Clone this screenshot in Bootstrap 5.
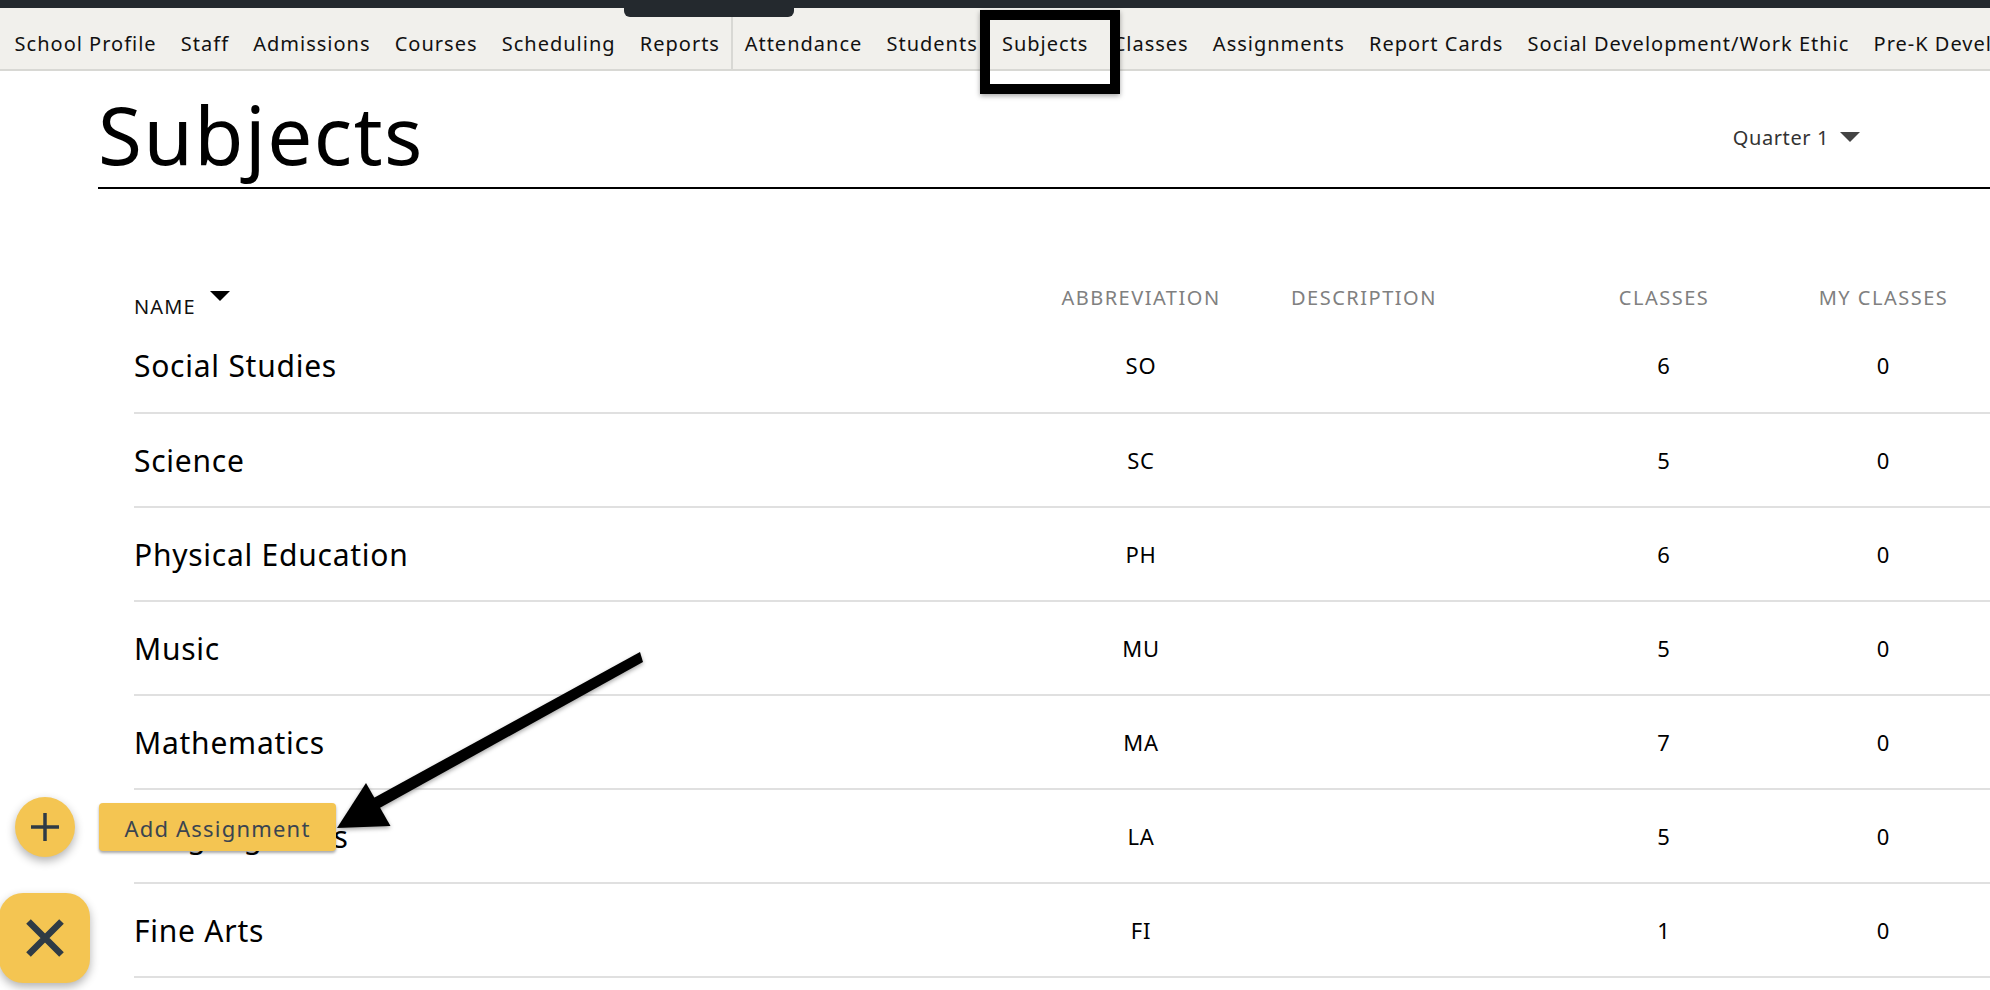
<!DOCTYPE html>
<html lang="en">
<head>
<meta charset="utf-8">
<title>Subjects</title>
<link href="https://cdn.jsdelivr.net/npm/bootstrap@5.3.0/dist/css/bootstrap.min.css" rel="stylesheet">
<style>
html,body{height:990px;overflow:hidden}
body{font-family:"Noto Sans","Liberation Sans",sans-serif;background:#fff;color:#000;position:relative}
.topstrip{height:8px;background:#24292e}
.toptab{position:absolute;left:624px;top:8px;width:170px;height:9px;background:#24292e;border-radius:0 0 6px 6px}
.schoolnav{height:63px;background:#f1f0ec;border-bottom:2px solid #d8d8d4;flex-wrap:nowrap;overflow:hidden;padding:11px 0 0 2.5px;white-space:nowrap}
.schoolnav .nav-link{color:#111;font-size:20px;line-height:50px;padding:0 12.1px;letter-spacing:1px}
.navsplit{border-left:2px solid #d8d8d4;margin-top:-11px;margin-left:-1.5px;padding-top:11px !important}
.pagemain{padding-left:98px}
.titlerow{height:118px;border-bottom:2px solid #000;padding-top:10px}
.pagetitle{font-size:80px;line-height:1;font-weight:400;margin:0;letter-spacing:1.5px;color:#000}
.termpick{font-size:20px;color:#333;margin-right:130px;letter-spacing:.6px;margin-top:8px}
.tri{display:inline-block;width:0;height:0;border-left:10px solid transparent;border-right:10px solid transparent;border-top:10px solid #444;margin-left:11px;vertical-align:3px}
.subjwrap{padding-left:36px;margin-top:72px}
.subjtable{--bs-table-color:#000;table-layout:fixed;width:1856px;margin:0}
.subjtable th{font-size:20px;font-weight:400;color:#808080;padding:19px 0 0;border:0;text-transform:uppercase;vertical-align:top;line-height:36px;letter-spacing:1.5px}
.subjtable th.sorted{color:#111;line-height:25px;padding:30px 0 0;letter-spacing:1.1px}
.subjtable th.sorted .tri{border-top-color:#000;margin-left:14px;vertical-align:13px}
.subjtable td{height:94px;padding:0;vertical-align:middle;border-bottom:2px solid #e0e0e0;font-size:22px;letter-spacing:.8px;color:#000}
.subjtable td.subjname{font-size:30px;letter-spacing:.75px}
.subjtable th:last-child,.subjtable td:last-child{padding-right:5px}
.fabround{position:absolute;left:15px;top:797px;width:60px;height:60px;border-radius:50%;background:#f4c552;box-shadow:0 4px 10px rgba(0,0,0,.3);border:0;padding:0}
.fabsquare{position:absolute;left:-1px;top:893px;width:91px;height:90px;border-radius:24px;background:#f4c552;box-shadow:0 4px 10px rgba(0,0,0,.3);border:0;padding:0}
.fablabel{position:absolute;left:99px;top:803px;width:237px;height:48px;border-radius:4px;background:#f4c552;color:#3a4450;font-size:22px;line-height:50px;text-align:center;box-shadow:0 2px 3px rgba(0,0,0,.35);letter-spacing:1.2px}
.hilite{position:absolute;left:980px;top:10px;width:140px;height:84px;border:10px solid #000;box-shadow:0 2px 5px rgba(0,0,0,.35)}
.pointer{position:absolute;left:0;top:0;pointer-events:none}
</style>
</head>
<body>
<div class="topstrip"></div>
<nav class="nav schoolnav">
<a class="nav-link" href="#">School Profile</a>
<a class="nav-link" href="#">Staff</a>
<a class="nav-link" href="#">Admissions</a>
<a class="nav-link" href="#">Courses</a>
<a class="nav-link" href="#">Scheduling</a>
<a class="nav-link" href="#">Reports</a>
<a class="nav-link navsplit" href="#">Attendance</a>
<a class="nav-link" href="#">Students</a>
<a class="nav-link" href="#">Subjects</a>
<a class="nav-link" href="#">Classes</a>
<a class="nav-link" href="#">Assignments</a>
<a class="nav-link" href="#">Report Cards</a>
<a class="nav-link" href="#">Social Development/Work Ethic</a>
<a class="nav-link" href="#">Pre-K Development</a>
</nav>
<div class="toptab"></div>
<main class="pagemain">
<div class="titlerow d-flex align-items-center justify-content-between">
<h1 class="pagetitle">Subjects</h1>
<div class="termpick">Quarter 1<span class="tri"></span></div>
</div>
<div class="subjwrap">
<table class="table subjtable">
<colgroup><col style="width:857px"><col style="width:300px"><col style="width:255px"><col style="width:236px"><col style="width:208px"></colgroup>
<thead><tr>
<th class="sorted">Name<span class="tri"></span></th>
<th class="text-center">Abbreviation</th>
<th>Description</th>
<th class="text-center">Classes</th>
<th class="text-center">My Classes</th>
</tr></thead>
<tbody>
<tr><td class="subjname">Social Studies</td><td class="text-center">SO</td><td></td><td class="text-center">6</td><td class="text-center">0</td></tr>
<tr><td class="subjname">Science</td><td class="text-center">SC</td><td></td><td class="text-center">5</td><td class="text-center">0</td></tr>
<tr><td class="subjname">Physical Education</td><td class="text-center">PH</td><td></td><td class="text-center">6</td><td class="text-center">0</td></tr>
<tr><td class="subjname">Music</td><td class="text-center">MU</td><td></td><td class="text-center">5</td><td class="text-center">0</td></tr>
<tr><td class="subjname">Mathematics</td><td class="text-center">MA</td><td></td><td class="text-center">7</td><td class="text-center">0</td></tr>
<tr><td class="subjname">Language Arts</td><td class="text-center">LA</td><td></td><td class="text-center">5</td><td class="text-center">0</td></tr>
<tr><td class="subjname">Fine Arts</td><td class="text-center">FI</td><td></td><td class="text-center">1</td><td class="text-center">0</td></tr>
</tbody>
</table>
</div>
</main>
<button class="fabround d-flex align-items-center justify-content-center" aria-label="Add">
<svg width="28" height="28" viewBox="0 0 28 28"><path d="M14 0V28M0 14H28" stroke="#2f3b45" stroke-width="3.5" fill="none"/></svg>
</button>
<div class="fablabel">Add Assignment</div>
<button class="fabsquare d-flex align-items-center justify-content-center" aria-label="Close">
<svg width="38" height="38" viewBox="0 0 38 38"><path d="M2.5 2.5L35.5 35.5M35.5 2.5L2.5 35.5" stroke="#2f3b45" stroke-width="6.5" fill="none"/></svg>
</button>
<div class="hilite"></div>
<svg class="pointer" width="1990" height="990" viewBox="0 0 1990 990">
<defs><filter id="arrowshade" x="-10%" y="-10%" width="120%" height="120%"><feDropShadow dx="0" dy="2" stdDeviation="2" flood-color="#000" flood-opacity=".35"/></filter></defs>
<g filter="url(#arrowshade)">
<path d="M640 652L643 662L376 810L370 800Z" fill="#000"/>
<path d="M337 828L366 783L390.500 826Z" fill="#000"/>
</g>
</svg>
<script src="https://cdn.jsdelivr.net/npm/bootstrap@5.3.0/dist/js/bootstrap.bundle.min.js"></script>
</body>
</html>
